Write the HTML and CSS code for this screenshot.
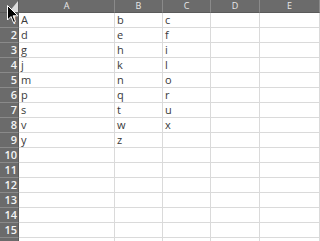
FILE: index.html
```html
<!DOCTYPE html>
<html>
<head>
<meta charset="utf-8">
<link rel="stylesheet" href="styles.css">
</head>
<body>
<div class="sheet">
  <div class="corner">
    <svg class="tri" width="19" height="13" viewBox="0 0 19 13"><polygon points="18,1 18,12 9,12" fill="#dcdcdc"/></svg>
  </div>
  <div class="ch">A</div><div class="ch">B</div><div class="ch">C</div><div class="ch">D</div><div class="ch last">E</div>

  <div class="rh">1</div><div class="c">A</div><div class="c">b</div><div class="c">c</div><div class="c"></div><div class="c"></div>
  <div class="rh">2</div><div class="c">d</div><div class="c">e</div><div class="c">f</div><div class="c"></div><div class="c"></div>
  <div class="rh">3</div><div class="c">g</div><div class="c">h</div><div class="c">i</div><div class="c"></div><div class="c"></div>
  <div class="rh">4</div><div class="c">j</div><div class="c">k</div><div class="c">l</div><div class="c"></div><div class="c"></div>
  <div class="rh">5</div><div class="c">m</div><div class="c">n</div><div class="c">o</div><div class="c"></div><div class="c"></div>
  <div class="rh">6</div><div class="c">p</div><div class="c">q</div><div class="c">r</div><div class="c"></div><div class="c"></div>
  <div class="rh">7</div><div class="c">s</div><div class="c">t</div><div class="c">u</div><div class="c"></div><div class="c"></div>
  <div class="rh">8</div><div class="c">v</div><div class="c">w</div><div class="c">x</div><div class="c"></div><div class="c"></div>
  <div class="rh">9</div><div class="c">y</div><div class="c">z</div><div class="c"></div><div class="c"></div><div class="c"></div>
  <div class="rh">10</div><div class="c"></div><div class="c"></div><div class="c"></div><div class="c"></div><div class="c"></div>
  <div class="rh">11</div><div class="c"></div><div class="c"></div><div class="c"></div><div class="c"></div><div class="c"></div>
  <div class="rh">12</div><div class="c"></div><div class="c"></div><div class="c"></div><div class="c"></div><div class="c"></div>
  <div class="rh">13</div><div class="c"></div><div class="c"></div><div class="c"></div><div class="c"></div><div class="c"></div>
  <div class="rh">14</div><div class="c"></div><div class="c"></div><div class="c"></div><div class="c"></div><div class="c"></div>
  <div class="rh">15</div><div class="c"></div><div class="c"></div><div class="c"></div><div class="c"></div><div class="c"></div>
  <div class="rh"></div><div class="c"></div><div class="c"></div><div class="c"></div><div class="c"></div><div class="c"></div>

  <svg class="cursor" width="12" height="19" viewBox="0 0 12 19">
    <path d="M0.5,0.5 L0.5,15 L4,11.5 L6.5,17.5 L8.5,16.5 L6,10.8 L10.8,10.8 Z" fill="#000" stroke="#fff" stroke-width="1"/>
  </svg>
</div>
</body>
</html>
```
FILE: styles.css
```css
html, body {
  margin: 0;
  padding: 0;
  background: #ffffff;
  overflow: hidden;
}
.sheet {
  position: relative;
  display: grid;
  grid-template-columns: 19px 96px 48px 48px 49px 60px;
  grid-template-rows: 13px repeat(16, 15px);
  font-family: "Open Sans", "Noto Sans", sans-serif;
  width: 320px;
}
.corner {
  background: #6b6b6b;
  border-right: 1px solid #5a5a5a;
  border-bottom: 1px solid #5a5a5a;
  box-sizing: border-box;
  position: relative;
}
.tri {
  position: absolute;
  left: 0;
  top: 0;
}
.ch {
  background: #6b6b6b;
  color: #e8e8e8;
  font-size: 9px;
  line-height: 12px;
  text-align: center;
  border-right: 1px solid #8a8a8a;
  border-bottom: 1px solid #5a5a5a;
  box-sizing: border-box;
}
.rh {
  background: #6b6b6b;
  color: #f4f4f4;
  font-size: 11px;
  font-weight: 600;
  line-height: 14px;
  text-align: right;
  padding-right: 1px;
  border-bottom: 1px solid #8a8a8a;
  border-right: 1px solid #5a5a5a;
  box-sizing: border-box;
}
.c {
  color: #3a3a3a;
  font-size: 11px;
  line-height: 14px;
  padding-left: 2px;
  border-right: 1px solid #dadada;
  border-bottom: 1px solid #dadada;
  box-sizing: border-box;
}
.cursor {
  position: absolute;
  left: 7px;
  top: 5px;
}
```
